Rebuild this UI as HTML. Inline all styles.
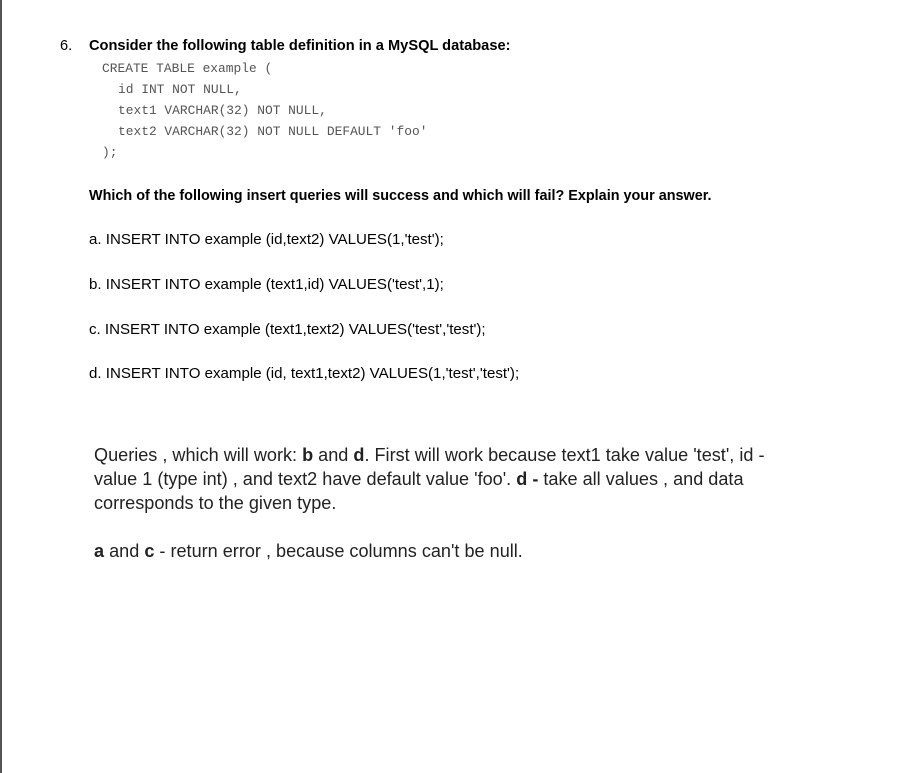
<!DOCTYPE html>
<html><head><meta charset="utf-8"><style>
body{margin:0;width:908px;height:773px;background:#fff;position:relative;overflow:hidden;font-family:"Liberation Sans",sans-serif;color:#000}
.bl{position:absolute;left:0;top:0;width:2px;height:773px;background:#555}
.t{position:absolute;white-space:nowrap;transform-origin:0 50%;line-height:1}
.c{position:absolute;white-space:nowrap;font-family:"Liberation Mono",monospace;font-size:12.9px;color:#555;line-height:1}
.h{font-weight:bold;font-size:15px;transform:scaleX(0.975)}
.q{font-size:15px;transform:scaleX(1.005)}
.a{font-size:18px;color:#222;transform:scaleX(1.005)}
</style></head><body>
<div class="bl"></div>
<div class="t h" style="left:60px;top:38px;font-weight:normal">6.</div>
<div class="t h" style="left:89px;top:38px">Consider the following table definition in a MySQL database:</div>
<div class="c" style="left:102px;top:63px">CREATE TABLE example (</div>
<div class="c" style="left:118px;top:84px">id INT NOT NULL,</div>
<div class="c" style="left:118px;top:105px">text1 VARCHAR(32) NOT NULL,</div>
<div class="c" style="left:118px;top:126px">text2 VARCHAR(32) NOT NULL DEFAULT 'foo'</div>
<div class="c" style="left:102px;top:147px">);</div>
<div class="t h" style="left:89px;top:188px;transform:scaleX(0.96)">Which of the following insert queries will success and which will fail? Explain your answer.</div>
<div class="t q" style="left:89px;top:232px">a. INSERT INTO example (id,text2) VALUES(1,'test');</div>
<div class="t q" style="left:89px;top:277px">b. INSERT INTO example (text1,id) VALUES('test',1);</div>
<div class="t q" style="left:89px;top:322px">c. INSERT INTO example (text1,text2) VALUES('test','test');</div>
<div class="t q" style="left:89px;top:366px">d. INSERT INTO example (id, text1,text2) VALUES(1,'test','test');</div>
<div class="t a" style="left:94px;top:446px">Queries , which will work: <b>b</b> and <b>d</b>. First will work because text1 take value 'test', id -</div>
<div class="t a" style="left:94px;top:470px">value 1 (type int) , and text2 have default value 'foo'. <b>d -</b> take all values , and data</div>
<div class="t a" style="left:94px;top:494px">corresponds to the given type.</div>
<div class="t a" style="left:94px;top:542px"><b>a</b> and <b>c</b> - return error , because columns can't be null.</div>
</body></html>
